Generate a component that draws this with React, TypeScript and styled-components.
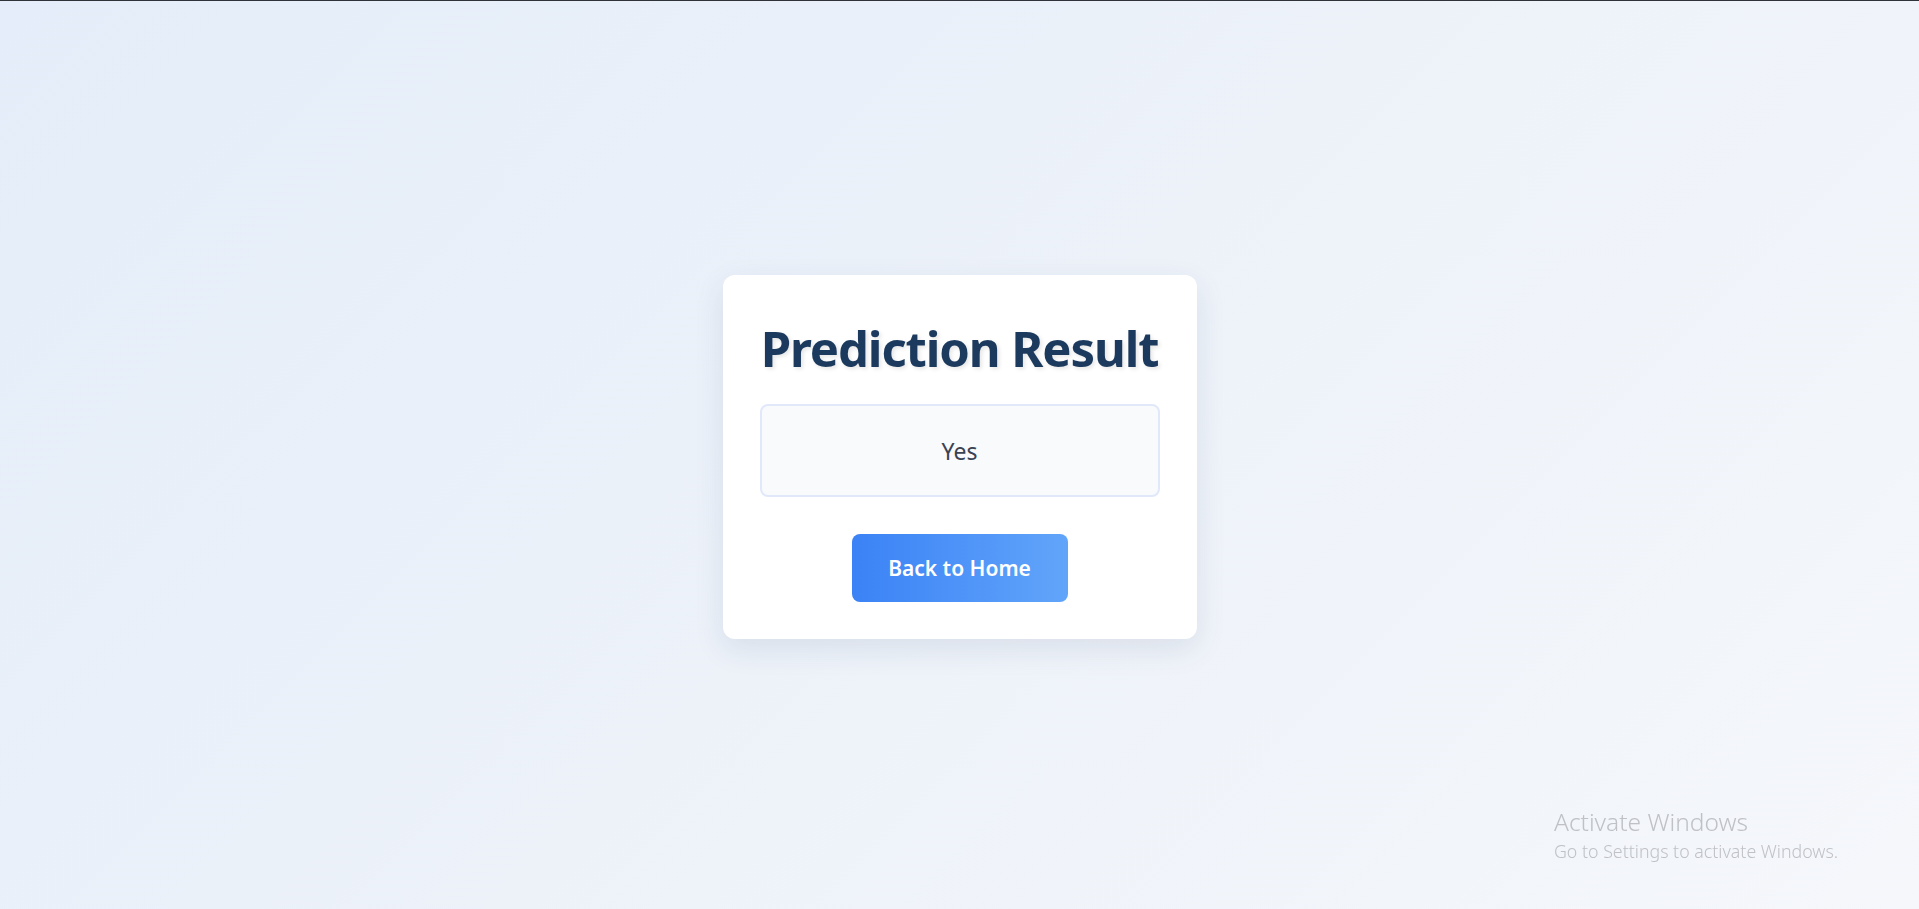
import React from "react";
import styled, { createGlobalStyle } from "styled-components";

const Global = createGlobalStyle`
  html, body { margin: 0; padding: 0; }
  body {
    font-family: "Noto Sans", "Open Sans", Arial, sans-serif;
    background: linear-gradient(135deg, #e4edf9 0%, #edf2f9 50%, #f5f7fb 100%);
    min-height: 100vh;
    border-top: 1px solid #2f3238;
    box-sizing: border-box;
  }
`;

const Page = styled.main`
  min-height: calc(100vh - 1px);
  display: flex;
  align-items: center;
  justify-content: center;
  padding-top: 4px;
  box-sizing: border-box;
`;

const Card = styled.section`
  width: 474px;
  box-sizing: border-box;
  background: #ffffff;
  border-radius: 12px;
  box-shadow: 0 10px 30px rgba(30, 58, 95, 0.1);
  padding: 37px;
  display: flex;
  flex-direction: column;
  align-items: center;
`;

const Title = styled.h1`
  margin: 0;
  padding-top: 12px;
  font-size: 49px;
  line-height: 1;
  font-weight: 700;
  color: #1c3a5d;
  text-shadow: 2px 2px 4px rgba(0, 0, 0, 0.1);
  white-space: nowrap;
  letter-spacing: -1.1px;
`;

const ResultBox = styled.div`
  margin-top: 31px;
  width: 100%;
  height: 93px;
  box-sizing: border-box;
  border: 2px solid #e0e8fa;
  border-radius: 8px;
  background: #f8fafc;
  display: flex;
  align-items: center;
  justify-content: center;
  font-size: 23px;
  color: #3a4354;
`;

const HomeButton = styled.button`
  margin-top: 37px;
  width: 216px;
  height: 68px;
  border: none;
  border-radius: 8px;
  background: linear-gradient(90deg, #3b82f6 0%, #61a5fa 100%);
  color: #ffffff;
  font-family: "Noto Sans", "Open Sans", Arial, sans-serif;
  font-size: 21px;
  font-weight: 600;
  cursor: pointer;
`;

const Watermark = styled.div`
  position: fixed;
  left: 1554px;
  top: 806px;
  color: #bfc1c6;
  font-family: "Noto Sans", "Open Sans", Arial, sans-serif;
  pointer-events: none;
`;

const WatermarkTitle = styled.div`
  font-size: 24.5px;
  font-weight: 300;
  line-height: 31px;
`;

const WatermarkSub = styled.div`
  font-size: 17.8px;
  font-weight: 300;
  line-height: 29px;
`;

export default function App() {
  return (
    <>
      <Global />
      <Page>
        <Card>
          <Title>Prediction Result</Title>
          <ResultBox>Yes</ResultBox>
          <HomeButton>Back to Home</HomeButton>
        </Card>
      </Page>
      <Watermark>
        <WatermarkTitle>Activate Windows</WatermarkTitle>
        <WatermarkSub>Go to Settings to activate Windows.</WatermarkSub>
      </Watermark>
    </>
  );
}
